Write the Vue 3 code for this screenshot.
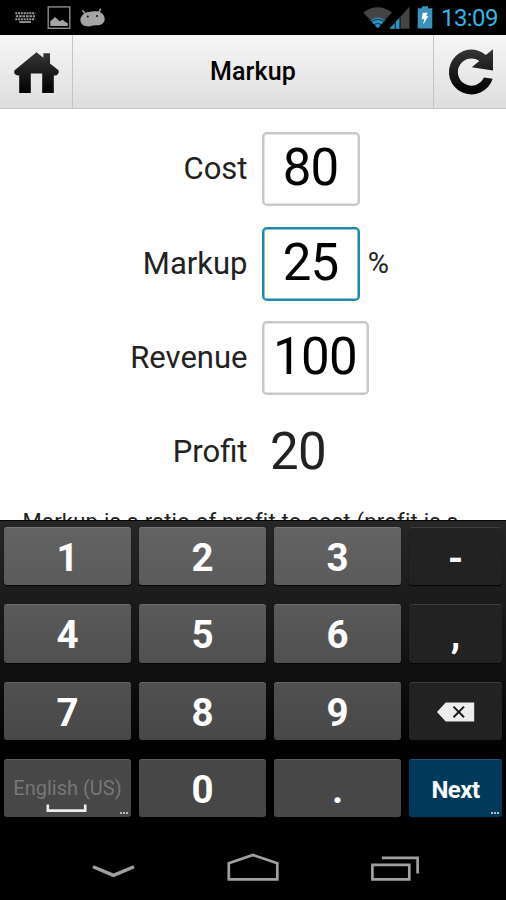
<script setup>
const fields = [
  { label: 'Cost', value: '80', box: true },
  { label: 'Markup', value: '25', box: true, active: true, unit: '%' },
  { label: 'Revenue', value: '100', box: true, wide: true },
  { label: 'Profit', value: '20', box: false },
]
const rows = [
  ['1', '2', '3', '-'],
  ['4', '5', '6', ','],
  ['7', '8', '9', 'del'],
  ['space', '0', '.', 'Next'],
]
</script>

<template>
  <div class="screen">
    <div class="status">
      <svg class="status-left" width="110" height="35" viewBox="0 0 110 35">
        <g stroke="#999" fill="none" stroke-width="2">
          <path d="M15.3 13.3H35.3" stroke-dasharray="2 0.8" />
          <path d="M15.8 16.3H35" stroke-dasharray="2.6 0.8" />
          <path d="M15.3 19.3H35.3" stroke-dasharray="2 0.8" />
          <path d="M19.3 22H31" stroke-width="1.8" />
        </g>
        <rect x="48.2" y="6.9" width="21.6" height="21.4" fill="none" stroke="#8c8c8c" stroke-width="1.4" />
        <path d="M50.3 26V21.3L52.5 19.5L55 17L57.2 19L59.5 21.3L63 19.8L65 21.8L67.8 23.3V26Z" fill="#a5a5a5" />
        <path d="M82.4 10.2L86 14.5M100.6 8.6L98.5 13.5" stroke="#a5a5a5" stroke-width="1.5" />
        <path d="M84.5 13.4C87 11.8 94 10.6 98.5 11.6C103 13 105.2 17 104.6 20C104 24 100 25.6 96 25.2C92 25.2 90.5 26.8 87 26.3C82 26 80 22 80.4 19C81 16 82.5 14.7 84.5 13.4Z" fill="#a5a5a5" />
        <circle cx="87.8" cy="16.4" r="1" fill="#111" />
        <circle cx="97" cy="15.9" r="1" fill="#111" />
      </svg>
      <div class="status-right">
        <svg width="74" height="35" viewBox="0 0 74 35">
          <path d="M0.3 12.4Q14.7 2 29 12.4L14.7 28.3Z" fill="#444" />
          <path d="M7.5 20.4Q14.7 14.5 22 20.4L14.7 28.3Z" fill="#2a93c2" />
          <path d="M8.6 21.3Q14.7 17.5 20.8 21.3M11 24.6Q14.7 22.2 18.4 24.6" fill="none" stroke="#0a1a22" stroke-width="0.9" />
          <path d="M46.5 6.4V28.7H26.5Z" fill="#444" />
          <path d="M37 17V28.7H26.5Z" fill="#2a93c2" />
          <path d="M32.2 20V29M37 14V29" stroke="#000" stroke-width="0.9" />
          <path d="M54.7 8.3H59V6.2H65V8.3H69.3V28.6H54.7Z" fill="#3a92b8" />
          <path d="M59.7 12.7L64.8 12.7L63 16.3L65.5 16.1L60.1 24.4L61.4 19L58.7 19.3Z" fill="#fff" />
        </svg>
        <span class="clock">13:09</span>
      </div>
    </div>

    <header class="header">
      <div class="head-btn home">
        <svg width="72" height="73" viewBox="0 0 72 73">
          <defs>
            <linearGradient id="ink" x1="0" y1="0" x2="0" y2="1">
              <stop offset="0" stop-color="#363636" />
              <stop offset="1" stop-color="#000" />
            </linearGradient>
          </defs>
          <path d="M36.5 17.2L43.4 22.8V18.2H50V28.4L58.5 35.3Q59.5 37.5 58 39Q56.5 41 53.8 40.5V58H42.2V38.5H30.8V58H19.2V40.5Q16 41 14.6 38.8Q13.5 37 14.6 35.3Z" fill="url(#ink)" />
        </svg>
      </div>
      <h1>Markup</h1>
      <div class="head-btn reload">
        <svg width="72" height="73" viewBox="0 0 72 73">
          <defs>
            <linearGradient id="ink2" x1="0" y1="0" x2="0" y2="1">
              <stop offset="0" stop-color="#363636" />
              <stop offset="1" stop-color="#000" />
            </linearGradient>
          </defs>
          <path d="M59 14.2V35.5L37.8 32.2L45.3 25.9A13.6 13.6 0 1 0 49.9 42.6L58.7 43.8A22.4 22.4 0 1 1 51.8 19.9Z" fill="url(#ink2)" />
        </svg>
      </div>
    </header>

    <main class="content">
      <div v-for="f in fields" :key="f.label" class="field">
        <label>{{ f.label }}</label>
        <div class="value" :class="{ boxed: f.box, active: f.active, wide: f.wide }">{{ f.value }}</div>
        <span v-if="f.unit" class="unit">{{ f.unit }}</span>
      </div>
      <p class="note">Markup is a ratio of profit to cost (profit is a</p>
    </main>

    <section class="keyboard">
      <div v-for="(row, r) in rows" :key="r" class="krow">
        <div
          v-for="(k, c) in row"
          :key="k"
          class="key"
          :class="['shade' + r, { dark: c === 3, next: k === 'Next', hyphen: k === '-' }]"
        >
          <div v-if="k === 'space'" class="lang">
            <span>English (US)</span>
            <svg width="42" height="9" viewBox="0 0 42 9"><path d="M1.8 0.5V6.6H39.2V0.5" fill="none" stroke="#eee" stroke-width="2.6" /></svg>
          </div>
          <svg v-else-if="k === 'del'" width="40" height="22" viewBox="0 0 40 22">
            <path d="M1 11L9.7 1.4H38.2V20.6H9.7Z" fill="#ececec" />
            <path d="M17.5 5.6L28 16.2M28 5.6L17.5 16.2" stroke="#1b1b1b" stroke-width="2" />
          </svg>
          <span v-else>{{ k }}</span>
          <i v-if="k === 'space' || k === 'Next'" class="more"></i>
        </div>
      </div>
    </section>

    <nav class="nav">
      <svg width="506" height="74" viewBox="0 0 506 74" fill="none" stroke="#a0a0a0" stroke-width="2.7">
        <path d="M93 40.8L113.5 49.4L134 40.8" stroke-width="3.4" />
        <path d="M228.8 53.4V37.3L253 29L277.3 37.3V53.4Z" />
        <path d="M372.4 38.9H409.3V53.3H372.4Z" />
        <path d="M382 31.8H417.6V47.5" />
      </svg>
    </nav>
  </div>
</template>

<style>
body { margin: 0; background: #000; }
</style>

<style scoped>
.screen {
  width: 506px;
  height: 900px;
  display: flex;
  flex-direction: column;
  overflow: hidden;
  background: #000;
  font-family: Roboto, "Liberation Sans", sans-serif;
}
svg { display: block; flex: none; }
.status {
  height: 35px;
  flex: none;
  display: flex;
  justify-content: space-between;
}
.status-right { display: flex; width: 143px; }
.clock {
  color: #33b5e5;
  font-size: 24px;
  letter-spacing: -0.6px;
  line-height: 36px;
  margin-left: 4px;
  font-weight: 400;
  white-space: nowrap;
}
.header {
  height: 74px;
  flex: none;
  box-sizing: border-box;
  display: flex;
  background: linear-gradient(#f6f6f6, #dedede);
  border-bottom: 1px solid #c9c9c9;
}
.head-btn { width: 72px; flex: none; }
.home { border-right: 1px solid #c4c4c4; }
.reload { border-left: 1px solid #c4c4c4; }
h1 {
  flex: 1;
  margin: 0;
  text-align: center;
  font-size: 25px;
  letter-spacing: 0.15px;
  line-height: 73px;
  font-weight: 500;
  color: #000;
}
.content {
  height: 411px;
  flex: none;
  box-sizing: border-box;
  padding-top: 23.4px;
  background: #fff;
  overflow: hidden;
}
.field {
  display: flex;
  height: 74px;
  margin-bottom: 20.2px;
  color: #222;
}
label {
  width: 247.5px;
  flex: none;
  text-align: right;
  font-size: 31px;
  line-height: 74px;
  font-weight: 400;
}
.value {
  box-sizing: border-box;
  margin-left: 14px;
  width: 98.2px;
  height: 74px;
  padding-left: 8.5px;
  font-size: 51px;
  letter-spacing: -0.7px;
  line-height: 73px;
}
.boxed {
  border: 2px solid #c8c8c8;
  border-radius: 5px;
  box-shadow: inset 0 0 0 0.5px #c8c8c8;
  padding: 0;
  text-align: center;
  line-height: 68px;
  color: #000;
}
.active { border-color: #1e88ad; box-shadow: inset 0 0 0 0.5px #1e88ad; }
.wide { width: 107px; }
.unit { margin-left: 8px; font-size: 29px; line-height: 73px; }
.note {
  margin: -0.6px 0 0;
  padding-left: 22.5px;
  font-size: 22px;
  letter-spacing: 0.24px;
  line-height: 26px;
  color: #222;
  white-space: nowrap;
}
.keyboard {
  height: 306px;
  flex: none;
  box-sizing: border-box;
  padding: 6px 4px 0;
  border-top: 1px solid #060606;
  background: linear-gradient(#262626, #141414 42%, #000 78%);
}
.krow {
  display: grid;
  grid-template-columns: 127px 127px 127px 93px;
  column-gap: 8px;
  height: 58.3px;
  margin-bottom: 19px;
}
.key {
  position: relative;
  display: flex;
  align-items: center;
  justify-content: center;
  box-sizing: border-box;
  padding-top: 3px;
  border-radius: 3px;
  color: #fff;
  font-size: 38.5px;
  font-weight: 700;
  box-shadow: 0 1px 1px #050505, inset 0 1px 0 rgba(255, 255, 255, 0.13);
}
.shade0 { background: linear-gradient(#636363, #5b5b5b); }
.shade1 { background: linear-gradient(#5a5a5a, #505050); }
.shade2 { background: linear-gradient(#505050, #484848); }
.shade3 { background: #474747; }
.dark { background: #222; }
.hyphen { padding-top: 5px; }
.next { background: #003a5a; font-size: 24px; letter-spacing: -0.5px; font-weight: 700; padding-top: 3px; }
.lang {
  display: flex;
  flex-direction: column;
  align-items: center;
  padding-top: 6px;
  font-size: 20px;
  line-height: 32px;
  font-weight: 400;
  color: #777;
  white-space: nowrap;
}
.more {
  position: absolute;
  right: 3px;
  bottom: 3px;
  width: 8px;
  height: 2px;
  background: repeating-linear-gradient(90deg, #bbb 0 2px, transparent 2px 3px);
}
.nav { height: 74px; flex: none; background: #000; }
</style>
